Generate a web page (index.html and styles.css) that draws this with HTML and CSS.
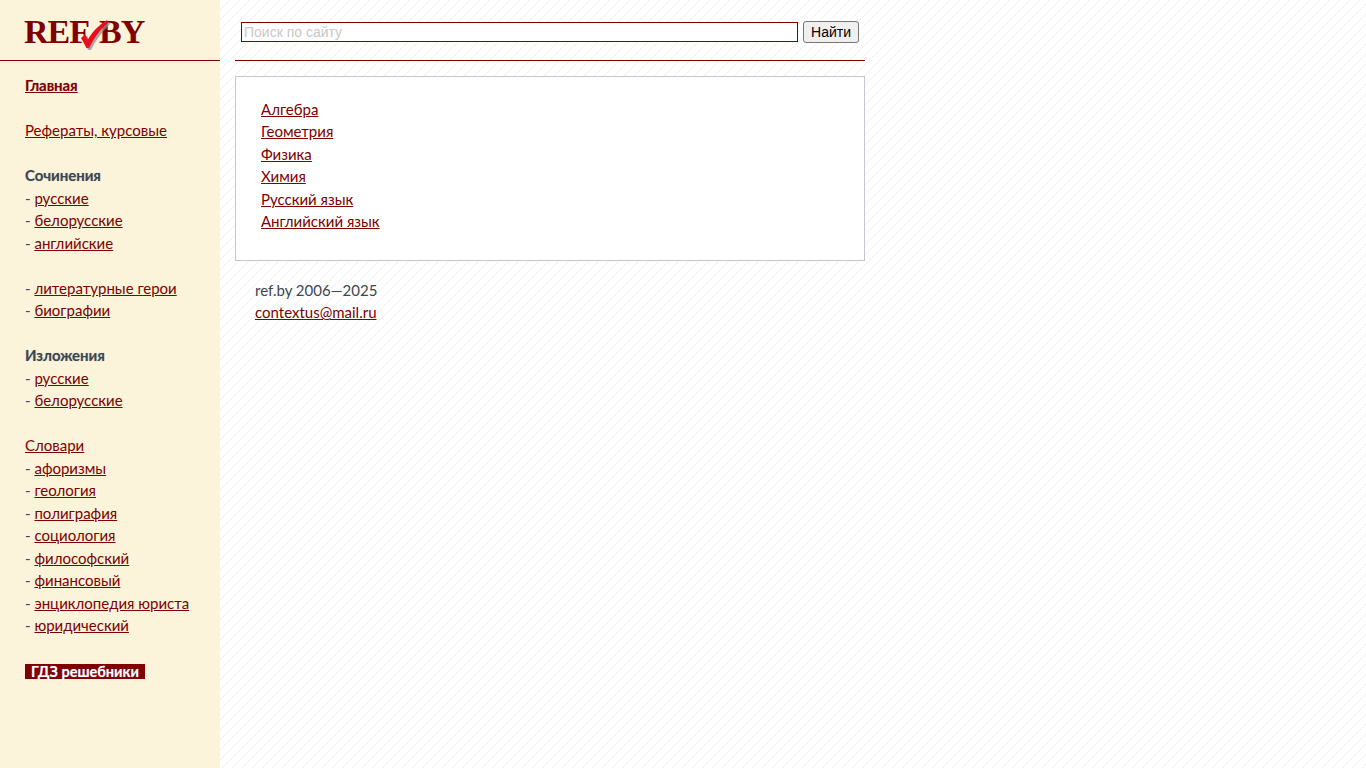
FILE: index.html
```html
<!DOCTYPE html>
<html lang="ru">
<head>
<meta charset="utf-8">
<title>REF.BY</title>
<link rel="stylesheet" href="styles.css">
</head>
<body>
<div class="page">
  <aside class="side">
    <div class="logo">
      <span class="logo-text">REF<span class="logo-gap"></span>BY</span>
      <svg class="logo-check" width="32" height="32" viewBox="80 19 32 32" aria-hidden="true">
        <path d="M83 39 L87 36 L90 41 C95 33 102 27 109 22 L110 24 C102 32 96 40 91 50 L88 50 Z" fill="#8f8f9c" opacity=".75"/>
        <path d="M81 38 L85 34.5 L88 39.5 C92 32 99 25 107 20 L108 22 C100 30 94 38 89 48 L86.5 48 Z" fill="#e8101c"/>
      </svg>
    </div>
    <nav class="menu">
      <p><a class="strong" href="#">Главная</a></p>
      <p><a href="#">Рефераты, курсовые</a></p>
      <p><b>Сочинения</b><br>- <a href="#">русские</a><br>- <a href="#">белорусские</a><br>- <a href="#">английские</a></p>
      <p>- <a href="#">литературные герои</a><br>- <a href="#">биографии</a></p>
      <p><b>Изложения</b><br>- <a href="#">русские</a><br>- <a href="#">белорусские</a></p>
      <p><a href="#">Словари</a><br>- <a href="#">афоризмы</a><br>- <a href="#">геология</a><br>- <a href="#">полиграфия</a><br>- <a href="#">социология</a><br>- <a href="#">философский</a><br>- <a href="#">финансовый</a><br>- <a href="#">энциклопедия юриста</a><br>- <a href="#">юридический</a></p>
      <a class="gdz" href="#">ГДЗ решебники</a>
    </nav>
  </aside>
  <main class="main">
    <form class="search">
      <input class="search-input" type="text" placeholder="Поиск по сайту">
      <button class="search-btn" type="button">Найти</button>
    </form>
    <section class="box">
      <a href="#">Алгебра</a><br>
      <a href="#">Геометрия</a><br>
      <a href="#">Физика</a><br>
      <a href="#">Химия</a><br>
      <a href="#">Русский язык</a><br>
      <a href="#">Английский язык</a>
    </section>
    <footer class="foot">ref.by 2006—2025<br><a href="#">contextus@mail.ru</a></footer>
  </main>
</div>
</body>
</html>
```

FILE: styles.css
```css
html, body { margin: 0; height: 100%; }
body {
  font-family: Lato, sans-serif;
  font-size: 15px;
  line-height: 22.5px;
  color: #3c4650;
  background-color: #fff;
  background-image: url("data:image/svg+xml,%3Csvg xmlns='http://www.w3.org/2000/svg' width='10' height='10' shape-rendering='crispEdges'%3E%3Cpath fill='%23f0f0f0' d='M9 0h1v1H9zM8 1h1v1H8zM7 2h1v1H7zM6 3h1v1H6zM5 4h1v1H5zM4 5h1v1H4zM3 6h1v1H3zM2 7h1v1H2zM1 8h1v1H1zM0 9h1v1H0z'/%3E%3C/svg%3E");
}
a { color: #800000; }
.page { display: flex; min-height: 768px; }
.side { width: 220px; flex: none; background: #fbf3da; }
.logo {
  position: relative;
  box-sizing: border-box;
  border-bottom: 1px solid #800000;
  padding: 13px 0 0 24px;
  height: 61px;
}
.logo-text {
  font-family: "Liberation Serif", serif;
  font-weight: bold;
  font-size: 34px;
  line-height: 38px;
  letter-spacing: -1px;
  color: #800000;
  display: block;
}
.logo-gap { display: inline-block; width: 10px; }
.logo-check { position: absolute; left: 80px; top: 19px; }
.menu { padding: 13px 0 0 25px; }
.menu p { margin: 0 0 22.5px; }
.menu b, .strong { font-weight: bold; letter-spacing: -.07px; text-shadow: 0 0 1px rgba(60, 70, 120, .35); }
.gdz {
  display: block;
  width: 120px;
  height: 15px;
  margin-top: 27px;
  background: #800000;
  color: #fff;
  font-weight: bold;
  font-size: 14.5px;
  line-height: 15px;
  text-align: center;
  text-decoration: none;
  white-space: nowrap;
  text-shadow: 0 0 1px rgba(190, 180, 255, .6);
}
.main { width: 630px; margin-left: 15px; }
.search {
  height: 60px;
  border-bottom: 1px solid #800000;
  display: flex;
  align-items: flex-start;
  padding-left: 6px;
  gap: 5px;
}
.search-input {
  margin-top: 22px;
  width: 557px;
  height: 20px;
  box-sizing: border-box;
  border: 1px solid #800000;
  padding: 1px 2px;
  font-family: "Liberation Sans", sans-serif;
  font-size: 14px;
  background: #fff;
}
.search-input::placeholder { color: #c8c8c8; opacity: 1; }
.search-btn {
  margin-top: 21px;
  width: 56px;
  height: 22px;
  padding: 0;
  font-family: "Liberation Sans", sans-serif;
  font-size: 14px;
  color: #000;
  background: #efefef;
  border: 1px solid #767676;
  border-radius: 3px;
}
.box {
  margin-top: 15px;
  box-sizing: border-box;
  height: 185px;
  background: #fff;
  border: 1px solid #c5c5d5;
  padding: 20.5px 25px;
}
.foot { padding: 17.5px 20px 0; }
```
